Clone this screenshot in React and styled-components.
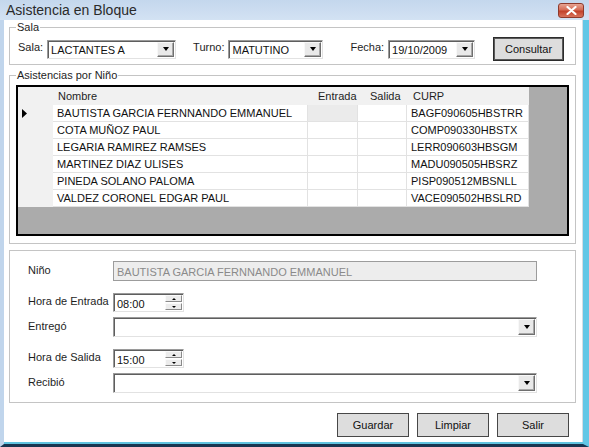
import styled, { createGlobalStyle } from "styled-components";

const GlobalStyle = createGlobalStyle`
  html, body { margin: 0; padding: 0; background: #fff; }
  body {
    font-family: "Liberation Sans", Arial, sans-serif;
    font-size: 11px;
    color: #000;
  }
  * { box-sizing: border-box; }
`;

const ninos = [
  { nombre: "BAUTISTA GARCIA FERNNANDO EMMANUEL", curp: "BAGF090605HBSTRR" },
  { nombre: "COTA MUÑOZ PAUL", curp: "COMP090330HBSTX" },
  { nombre: "LEGARIA RAMIREZ RAMSES", curp: "LERR090603HBSGM" },
  { nombre: "MARTINEZ DIAZ ULISES", curp: "MADU090505HBSRZ" },
  { nombre: "PINEDA SOLANO PALOMA", curp: "PISP090512MBSNLL" },
  { nombre: "VALDEZ CORONEL EDGAR PAUL", curp: "VACE090502HBSLRD" },
];

const ComboBox = ({ width, height = 19, value }) => (
  <Combo $w={width} $h={height}>
    <ComboText>{value}</ComboText>
    <DropButton $h={height - 4}>
      <Arrow />
    </DropButton>
  </Combo>
);

const Spinner = ({ value }) => (
  <Spin>
    <ComboText>{value}</ComboText>
    <SpinButtons>
      <SpinButton>
        <SmallArrow $up />
      </SpinButton>
      <SpinButton>
        <SmallArrow />
      </SpinButton>
    </SpinButtons>
  </Spin>
);

const App = () => {
  return (
    <>
      <GlobalStyle />
      <Window>
        <TitleBar>
          <Title>Asistencia en Bloque</Title>
          <CloseButton>
            <svg width="11" height="9" viewBox="0 0 11 9">
              <path d="M1.5 1 L9.5 8 M9.5 1 L1.5 8" stroke="#fff" strokeWidth="2.2" strokeLinecap="round" />
            </svg>
          </CloseButton>
        </TitleBar>

        <Frame>
          <Client>
            {/* Sala */}
            <Group $mt={1}>
              <Legend>Sala</Legend>
              <GroupBody $pad="3px 0 3px 8px">
                <FilterRow>
                  <FieldLabel>Sala:</FieldLabel>
                  <ComboBox width={129} value="LACTANTES A" />
                  <FieldLabel $ml={17}>Turno:</FieldLabel>
                  <ComboBox width={95} value="MATUTINO" />
                  <FieldLabel $ml={27}>Fecha:</FieldLabel>
                  <ComboBox width={87} value="19/10/2009" />
                  <Button $default $ml={18}>Consultar</Button>
                </FilterRow>
              </GroupBody>
            </Group>

            {/* Asistencias por Niño */}
            <Group $mt={4}>
              <Legend>Asistencias por Niño</Legend>
              <GroupBody $pad="3px 6px 7px 6px">
                <DataGrid>
                  <GridTable>
                    <HeaderCell />
                    <HeaderCell $pl={5}>Nombre</HeaderCell>
                    <HeaderCell $pl={10}>Entrada</HeaderCell>
                    <HeaderCell $pl={12}>Salida</HeaderCell>
                    <HeaderCell $pl={6}>CURP</HeaderCell>
                    {ninos.map((n, i) => (
                      <Row key={n.curp}>
                        <RowHeader>
                          {i === 0 && (
                            <svg width="5" height="9" viewBox="0 0 5 9">
                              <path d="M0 0 L5 4.5 L0 9 Z" fill="#000" />
                            </svg>
                          )}
                        </RowHeader>
                        <Cell>{n.nombre}</Cell>
                        <Cell $current={i === 0} />
                        <Cell />
                        <Cell>{n.curp}</Cell>
                      </Row>
                    ))}
                  </GridTable>
                </DataGrid>
              </GroupBody>
            </Group>

            {/* Detalle */}
            <Group $mt={6}>
              <GroupBody $pad="10px 38px 9px 18px">
                <FormRow>
                  <FormLabel>Niño</FormLabel>
                  <ReadOnlyBox>BAUTISTA GARCIA FERNNANDO EMMANUEL</ReadOnlyBox>
                </FormRow>
                <FormRow $mt={12}>
                  <FormLabel>Hora de Entrada</FormLabel>
                  <Spinner value="08:00" />
                </FormRow>
                <FormRow $mt={5}>
                  <FormLabel>Entregó</FormLabel>
                  <ComboBox width={424} height={20} value="" />
                </FormRow>
                <FormRow $mt={12}>
                  <FormLabel>Hora de Salida</FormLabel>
                  <Spinner value="15:00" />
                </FormRow>
                <FormRow $mt={5}>
                  <FormLabel>Recibió</FormLabel>
                  <ComboBox width={424} height={20} value="" />
                </FormRow>
              </GroupBody>
            </Group>

            <ButtonBar>
              <Button>Guardar</Button>
              <Button>Limpiar</Button>
              <Button>Salir</Button>
            </ButtonBar>
          </Client>
        </Frame>
      </Window>
    </>
  );
};

export default App;

// ventana
const Window = styled.div`
  width: 589px;
  height: 447px;
  display: flex;
  flex-direction: column;
  overflow: hidden;
  background: #c7d9ee;
`;

const TitleBar = styled.div`
  height: 20px;
  flex: none;
  display: flex;
  align-items: center;
  justify-content: space-between;
  padding: 0 5px 0 6px;
  background: linear-gradient(#c4d7ed, #d3e2f3);
`;

const Title = styled.span`
  font-size: 14px;
  color: #2a2a2a;
  line-height: 20px;
`;

const CloseButton = styled.span`
  width: 26px;
  height: 15px;
  display: flex;
  align-items: center;
  justify-content: center;
  border: 1px solid #8e3a2c;
  border-radius: 3px;
  background: linear-gradient(#e7a493 0%, #d56c55 45%, #c2412a 55%, #d8735c 100%);
`;

const Frame = styled.div`
  flex: 1;
  display: flex;
  border-left: 4px solid #c0d5ec;
  border-right: 6px solid #63c7e6;
  border-bottom: 3px solid #183550;
`;

const Client = styled.div`
  flex: 1;
  display: flex;
  flex-direction: column;
  background: #fff;
  padding: 0 7px 0 5px;
  border-bottom: 2px solid #5fc3df;
  box-shadow: inset -1px 0 0 #d6dde4;
`;

// grupos
const Group = styled.fieldset`
  margin: ${(p) => p.$mt || 0}px 0 0;
  padding: 0;
  min-width: 0;
  border: 1px solid #c4c4c4;
`;

const Legend = styled.legend`
  margin-left: 6px;
  padding: 0 1px;
  font-size: 11px;
  line-height: 13px;
  color: #1e1e1e;
`;

const GroupBody = styled.div`
  padding: ${(p) => p.$pad};
`;

const FilterRow = styled.div`
  height: 24px;
  display: flex;
  align-items: center;
`;

const FieldLabel = styled.span`
  margin: 0 4px 4px ${(p) => p.$ml || 0}px;
  color: #1e1e1e;
`;

// controles
const Combo = styled.div`
  width: ${(p) => p.$w}px;
  height: ${(p) => p.$h}px;
  display: flex;
  align-items: center;
  padding: 0 1px 0 3px;
  background: #fff;
  border: 1px solid;
  border-color: #9a9a9a #e2e2e2 #e2e2e2 #9a9a9a;
  box-shadow: inset 1px 1px 0 #5e5e5e;
`;

const ComboText = styled.span`
  flex: 1;
  padding-top: 2px;
  white-space: nowrap;
  color: #111;
`;

const DropButton = styled.span`
  width: 17px;
  height: ${(p) => p.$h}px;
  display: flex;
  align-items: center;
  justify-content: center;
  background: #e9e9e9;
  border: 1px solid;
  border-color: #f8f8f8 #6f6f6f #6f6f6f #f8f8f8;
  box-shadow: inset -1px -1px 0 #a8a8a8;
`;

const Arrow = styled.span`
  width: 0;
  height: 0;
  border-left: 3.5px solid transparent;
  border-right: 3.5px solid transparent;
  border-top: 4px solid #000;
`;

const Spin = styled(Combo).attrs({ $w: 71, $h: 19 })`
  padding-right: 1px;
`;

const SpinButtons = styled.span`
  width: 17px;
  height: 15px;
  display: flex;
  flex-direction: column;
  gap: 1px;
`;

const SpinButton = styled.span`
  flex: 1;
  display: flex;
  align-items: center;
  justify-content: center;
  background: #ececec;
  border: 1px solid;
  border-color: #fafafa #8a8a8a #8a8a8a #fafafa;
`;

const SmallArrow = styled.span`
  width: 0;
  height: 0;
  border-left: 2px solid transparent;
  border-right: 2px solid transparent;
  ${(p) => (p.$up ? "border-bottom: 2px solid #000;" : "border-top: 2px solid #000;")}
`;

const Button = styled.span`
  width: ${(p) => (p.$default ? 71 : 72)}px;
  height: 24px;
  margin-left: ${(p) => p.$ml || 0}px;
  display: flex;
  align-items: center;
  justify-content: center;
  background: #dddddd;
  border: 1px solid ${(p) => (p.$default ? "#2c2c2c" : "#474747")};
  box-shadow: ${(p) => (p.$default ? "inset 0 0 0 1px #5a5a5a" : "none")};
  color: #111;
`;

// rejilla
const DataGrid = styled.div`
  height: 151px;
  border: 2px solid #000;
  background: #ababab;
`;

const GridTable = styled.div`
  display: grid;
  grid-template-columns: 35px 255px 50px 49px 122px;
  grid-template-rows: 18px;
  grid-auto-rows: 17px;
  width: 511px;
`;

const HeaderCell = styled.div`
  display: flex;
  align-items: center;
  padding-left: ${(p) => p.$pl || 0}px;
  background: #f1f1f1;
  color: #1e1e1e;
`;

const Row = styled.div`
  display: contents;
`;

const RowHeader = styled.div`
  display: flex;
  align-items: center;
  padding-left: 4px;
  background: #f1f1f1;
`;

const Cell = styled.div`
  display: flex;
  align-items: center;
  padding-left: 4px;
  white-space: nowrap;
  overflow: hidden;
  background: ${(p) => (p.$current ? "#ebebeb" : "#fff")};
  border-right: 1px solid #e2e2e2;
  border-bottom: 1px solid #e2e2e2;
  color: #111;
`;

// formulario inferior
const FormRow = styled.div`
  display: flex;
  align-items: center;
  margin-top: ${(p) => p.$mt || 0}px;
`;

const FormLabel = styled.span`
  width: 85px;
  flex: none;
  margin-bottom: 3px;
  color: #1e1e1e;
`;

const ReadOnlyBox = styled.div`
  width: 424px;
  height: 20px;
  display: flex;
  align-items: center;
  padding: 2px 0 0 3px;
  background: #ededed;
  border: 1px solid #9c9c9c;
  color: #8a8a8a;
`;

const ButtonBar = styled.div`
  display: flex;
  justify-content: flex-end;
  gap: 8px;
  margin: 10px 7px 0 0;
`;
